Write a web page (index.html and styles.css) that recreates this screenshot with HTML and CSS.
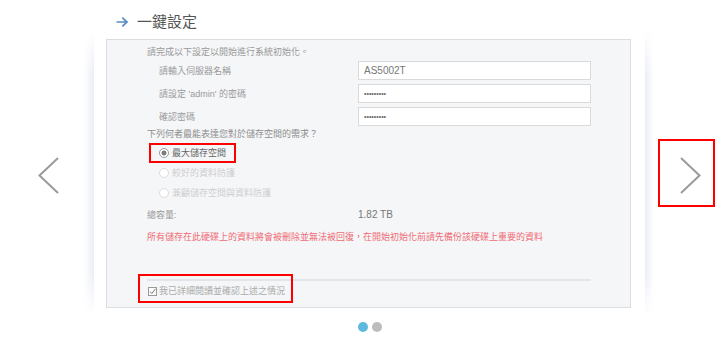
FILE: index.html
```html
<!DOCTYPE html>
<html lang="zh-Hant">
<head>
    <meta charset="UTF-8">
    <meta name="viewport" content="width=device-width, initial-scale=1.0">
    <title>一鍵設定</title>
    <link rel="stylesheet" href="styles.css">
</head>
<body>
    <div class="stage">
        <h1 class="title">
            <svg class="title-arrow" width="12" height="10" viewBox="0 0 12 10">
                <path d="M0.5 5 H11 M6.3 0.7 L11 5 L6.3 9.3" fill="none" stroke="#5a8cc4" stroke-width="1.7"/>
            </svg>
            一鍵設定
        </h1>

        <div class="nav nav-left">
            <svg class="chevron" width="21" height="37" viewBox="0 0 21 37">
                <polyline points="20,1 1.5,18.5 20,36" fill="none" stroke="#9a9a9a" stroke-width="2"/>
            </svg>
            <div class="shade shade-left"></div>
        </div>

        <div class="panel">
            <p class="intro">請完成以下設定以開始進行系統初始化。</p>

            <div class="field">
                <label class="field-label">請輸入伺服器名稱</label>
                <input class="field-input" type="text" value="AS5002T" readonly>
            </div>
            <div class="field">
                <label class="field-label">請設定 'admin' 的密碼</label>
                <input class="field-input dots" type="text" value="•••••••••" readonly>
            </div>
            <div class="field">
                <label class="field-label">確認密碼</label>
                <input class="field-input dots" type="text" value="•••••••••" readonly>
            </div>

            <p class="question">下列何者最能表達您對於儲存空間的需求？</p>

            <div class="options">
                <div class="option option-marked">
                    <span class="radio checked"></span>
                    <span>最大儲存空間</span>
                </div>
                <div class="option disabled">
                    <span class="radio"></span>
                    <span>較好的資料防護</span>
                </div>
                <div class="option disabled">
                    <span class="radio"></span>
                    <span>兼顧儲存空間與資料防護</span>
                </div>
            </div>

            <div class="capacity">
                <span class="capacity-label">總容量:</span>
                <span class="capacity-value">1.82 TB</span>
            </div>

            <p class="warning">所有儲存在此硬碟上的資料將會被刪除並無法被回復，在開始初始化前請先備份該硬碟上重要的資料</p>

            <div class="divider"></div>

            <div class="agree">
                <span class="checkbox">
                    <svg width="9" height="9" viewBox="0 0 9 9">
                        <rect x="0.5" y="0.5" width="8" height="8" fill="#fff" stroke="#999"/>
                        <polyline points="2,4.5 3.8,6.5 7.5,1.8" fill="none" stroke="#777" stroke-width="1"/>
                    </svg>
                </span>
                <span>我已詳細閱讀並確認上述之情況</span>
            </div>
        </div>

        <div class="nav nav-right">
            <div class="shade shade-right"></div>
            <div class="next-box">
                <svg class="chevron" width="21" height="37" viewBox="0 0 21 37">
                    <polyline points="1,1 19.5,18.5 1,36" fill="none" stroke="#9a9a9a" stroke-width="2"/>
                </svg>
            </div>
        </div>

        <div class="pager">
            <span class="dot active"></span>
            <span class="dot"></span>
        </div>
    </div>
</body>
</html>
```

FILE: styles.css
```css
body {
    margin: 0;
    background: #fff;
    font-family: "Liberation Sans", "Noto Sans CJK TC", sans-serif;
    color: #999;
}

.stage {
    display: grid;
    grid-template-columns: 106px 525px 97px;
    grid-template-rows: auto auto auto;
}

.title {
    grid-column: 2;
    grid-row: 1;
    display: flex;
    align-items: center;
    gap: 9px;
    margin: 0;
    padding: 12px 0 7px 10px;
    font-size: 15px;
    line-height: 20px;
    font-weight: normal;
    color: #555;
}

/* side columns */
.nav {
    grid-row: 2;
    display: flex;
    align-items: center;
}

.nav-left {
    grid-column: 1;
    padding-left: 38px;
}

.nav-left .chevron {
    margin-top: 5px;
}

.nav-right {
    grid-column: 3;
    padding-left: 14px;
}

.shade {
    align-self: stretch;
    width: 10px;
    margin: -8px 0;
    -webkit-mask-image: linear-gradient(to bottom, transparent, #000 15%, #000 85%, transparent);
    mask-image: linear-gradient(to bottom, transparent, #000 15%, #000 85%, transparent);
}

.shade-left {
    margin-left: 25px;
    background: linear-gradient(to right, rgba(255, 255, 255, 0), #eaedf6);
}

.shade-right {
    width: 9px;
    background: linear-gradient(to left, rgba(255, 255, 255, 0), #eaedf6);
}

.next-box {
    margin-left: 4px;
    width: 57px;
    height: 68px;
    box-sizing: border-box;
    border: 2px solid #f00;
    padding: 16px 0 0 20px;
}

.next-box .chevron {
    display: block;
}

/* panel */
.panel {
    grid-column: 2;
    grid-row: 2;
    background: #f5f6f8;
    border: 1px solid #dcdde0;
    padding: 5px 39px 7px 40px;
    font-size: 9px;
    line-height: 14px;
}

.panel p {
    margin: 0;
}

.intro {
    color: #999;
    margin-bottom: 2px !important;
}

.field {
    display: flex;
    align-items: center;
    height: 19px;
    margin-bottom: 4px;
}

.field-label {
    width: 199px;
    padding-left: 12px;
    color: #9a9a9a;
}

.field-input {
    width: 233px;
    height: 19px;
    box-sizing: border-box;
    border: 1px solid #dadada;
    background: #fff;
    padding: 0 5px;
    font-family: "Liberation Sans", sans-serif;
    font-size: 10px;
    color: #777;
    outline: none;
}

.field-input.dots {
    font-size: 7px;
    letter-spacing: 0;
    color: #666;
}

.question {
    margin-top: -3px !important;
    color: #8e8e8e;
}

.options {
    margin-top: 2px;
}

.option {
    display: flex;
    align-items: center;
    gap: 3px;
    height: 20px;
    padding-left: 12px;
    color: #666;
}

.option.disabled {
    color: #cfcfcf;
}

.option-marked {
    display: inline-flex;
    box-sizing: border-box;
    margin-left: 2px;
    padding: 0 8px;
    border: 2px solid #f00;
    height: 20px;
}

.radio {
    width: 10px;
    height: 10px;
    box-sizing: border-box;
    border: 1px solid #ddd;
    border-radius: 50%;
    background: #fff;
}

.radio.checked {
    border-color: #999;
    background: radial-gradient(circle, #7d7d7d 0 2.2px, #fff 2.8px);
}

.capacity {
    display: flex;
    margin-top: 5px;
}

.capacity-label {
    width: 211px;
}

.capacity-value {
    color: #777;
    font-size: 10px;
}

.warning {
    margin-top: 8px !important;
    color: #ef6a74;
}

.divider {
    margin-top: 35px;
    height: 2px;
    background: #e2e5ea;
}

.agree {
    position: relative;
    display: inline-flex;
    align-items: center;
    gap: 2px;
    margin-top: 3px;
    margin-left: 1px;
    color: #aaa;
}

.agree::after {
    content: "";
    position: absolute;
    top: -10px;
    bottom: -5px;
    left: -10px;
    right: -8px;
    border: 2px solid #f00;
}

.checkbox svg {
    display: block;
}

/* carousel dots */
.pager {
    grid-column: 2;
    grid-row: 3;
    display: flex;
    justify-content: center;
    gap: 4px;
    padding: 14px 0 0 3px;
}

.dot {
    width: 10px;
    height: 10px;
    border-radius: 50%;
    background: #bcbcbc;
}

.dot.active {
    background: #5dbadd;
}
```
